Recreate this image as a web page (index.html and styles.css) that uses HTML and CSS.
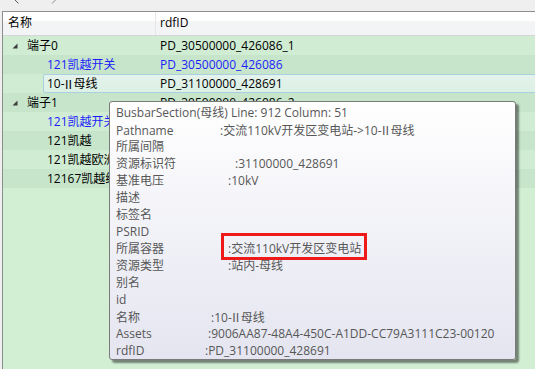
FILE: index.html
```html
<!DOCTYPE html>
<html lang="zh">
<head>
<meta charset="utf-8">
<link rel="stylesheet" href="styles.css">
</head>
<body>
<div class="topstrip">
  <svg class="tabmarks" width="60" height="11" viewBox="0 0 60 11">
    <path d="M15 0 L18.5 3.5" stroke="#5a5a5a" stroke-width="1" fill="none"/>
    <path d="M52 3.5 L55.5 0" stroke="#8a8a8a" stroke-width="1" fill="none"/>
  </svg>
</div>
<div class="frame">
  <div class="header">
    <div class="hcell c1">名称</div>
    <div class="hcell c2">rdfID</div>
  </div>
  <div class="rows">
    <div class="row odd">
      <div class="cell c1 lv0"><svg class="arrow" width="6" height="6" viewBox="0 0 6 6"><polygon points="5.5,0.5 5.5,5.5 0.5,5.5" fill="#3c3c3c"/></svg>端子0</div>
      <div class="cell c2">PD_30500000_426086_1</div>
    </div>
    <div class="row even blue">
      <div class="cell c1 lv1">121凯越开关</div>
      <div class="cell c2">PD_30500000_426086</div>
    </div>
    <div class="row odd">
      <div class="selbox"></div>
      <div class="cell c1 lv1">10-<span class="rn">Ⅱ</span>母线</div>
      <div class="cell c2">PD_31100000_428691</div>
    </div>
    <div class="row even">
      <div class="cell c1 lv0"><svg class="arrow" width="6" height="6" viewBox="0 0 6 6"><polygon points="5.5,0.5 5.5,5.5 0.5,5.5" fill="#3c3c3c"/></svg>端子1</div>
      <div class="cell c2">PD_30500000_426086_2</div>
    </div>
    <div class="row odd">
      <div class="cell c1 lv1 bluetext">121凯越开关</div>
      <div class="cell c2"></div>
    </div>
    <div class="row even">
      <div class="cell c1 lv1">121凯越</div>
      <div class="cell c2"></div>
    </div>
    <div class="row odd">
      <div class="cell c1 lv1">121凯越欧洲路</div>
      <div class="cell c2"></div>
    </div>
    <div class="row even">
      <div class="cell c1 lv1">12167凯越线</div>
      <div class="cell c2"></div>
    </div>
  </div>

  <div class="tooltip">
    <div class="tl">BusbarSection(母线) Line: 912 Column: 51</div>
    <div class="tl"><span class="k k-path">Pathname</span><span>:交流110kV开发区变电站-&gt;10-<span class="rn">Ⅱ</span>母线</span></div>
    <div class="tl">所属间隔</div>
    <div class="tl"><span class="k k-res">资源标识符</span><span>:31100000_428691</span></div>
    <div class="tl"><span class="k k-mid">基准电压</span><span>:10kV</span></div>
    <div class="tl">描述</div>
    <div class="tl">标签名</div>
    <div class="tl">PSRID</div>
    <div class="tl"><span class="k k-mid">所属容器</span><span class="hl">:交流110kV开发区变电站</span></div>
    <div class="tl"><span class="k k-mid">资源类型</span><span>:站内-母线</span></div>
    <div class="tl">别名</div>
    <div class="tl">id</div>
    <div class="tl"><span class="k k-name">名称</span><span>:10-<span class="rn">Ⅱ</span>母线</span></div>
    <div class="tl"><span class="k k-assets">Assets</span><span>:9006AA87-48A4-450C-A1DD-CC79A3111C23-00120</span></div>
    <div class="tl"><span class="k k-rdf">rdfID</span><span>:PD_31100000_428691</span></div>
  </div>
</div>
</body>
</html>
```

FILE: styles.css
```css
* { box-sizing: border-box; }
html, body {
  margin: 0;
  padding: 0;
}
body {
  width: 535px;
  height: 369px;
  overflow: hidden;
  background: #efefef;
  font-family: "Open Sans", "Noto Sans CJK SC", sans-serif;
  font-size: 12px;
  color: #000;
}
.rn {
  font-family: "Noto Sans CJK SC", sans-serif;
  margin: 0 -1px 0 -2px;
}
.topstrip {
  height: 11px;
  background: #efefef;
}
.tabmarks { display: block; }
.frame {
  position: relative;
  margin-left: 2px;
  height: 358px;
  border-top: 1px solid #8d8d8d;
  border-left: 1px solid #8d8d8d;
  background: #d2efd4;
  overflow: hidden;
}
.header {
  display: flex;
  height: 24px;
  background: linear-gradient(#ffffff 0px, #ffffff 8px, #f3f4f6 10px, #f3f4f6 22px);
  border-bottom: 1px solid #d5d5d5;
  box-shadow: 0 1px 0 #eaeaea;
}
.hcell {
  line-height: 22px;
  white-space: nowrap;
}
.hcell.c1 {
  width: 153px;
  padding-left: 5px;
  border-right: 1px solid #e6e6e6;
}
.hcell.c2 { padding-left: 4px; }
.rows { display: flex; flex-direction: column; }
.row {
  position: relative;
  display: flex;
  height: 19px;
  line-height: 19px;
  white-space: nowrap;
}
.row.odd { background: #d0ecd3; }
.row.even { background: #c6e5cb; }
.row.blue .cell { color: #1e1efa; }
.bluetext { color: #1e1efa; }
.cell { position: relative; overflow: hidden; }
.cell.c1 {
  width: 153px;
  display: flex;
  align-items: center;
}
.cell.c2 { padding-left: 4px; flex: 1; }
.lv0 { padding-left: 9px; }
.lv1 { padding-left: 44px; }
.arrow { margin-right: 9px; margin-top: 1px; }
.selbox {
  position: absolute;
  left: 40px;
  right: -4px;
  top: 0;
  bottom: 0;
  border: 1px solid #a9cfe0;
  border-radius: 2px;
  background: linear-gradient(#e4f3ec, #dcf0e4);
}
.tooltip {
  position: absolute;
  left: 106px;
  top: 89px;
  width: 407px;
  height: 259px;
  padding: 2px 6px 0 6px;
  border: 1px solid #7a7a7a;
  border-radius: 3px;
  background: linear-gradient(#ffffff, #e4e5f0);
  box-shadow: 3px 3px 2px rgba(0, 0, 0, 0.45);
  color: #575757;
}
.tl {
  height: 17px;
  line-height: 17px;
  white-space: nowrap;
}
.k { display: inline-block; }
.k-path { width: 104px; }
.k-res { width: 119px; }
.k-mid { width: 112px; }
.k-name { width: 95px; }
.k-assets { width: 92px; }
.k-rdf { width: 89px; }
.hl {
  position: relative;
}
.hl::after {
  content: "";
  position: absolute;
  left: -7px;
  right: -6px;
  top: -7px;
  bottom: -3px;
  border: 3px solid #ee1a1a;
}
```
